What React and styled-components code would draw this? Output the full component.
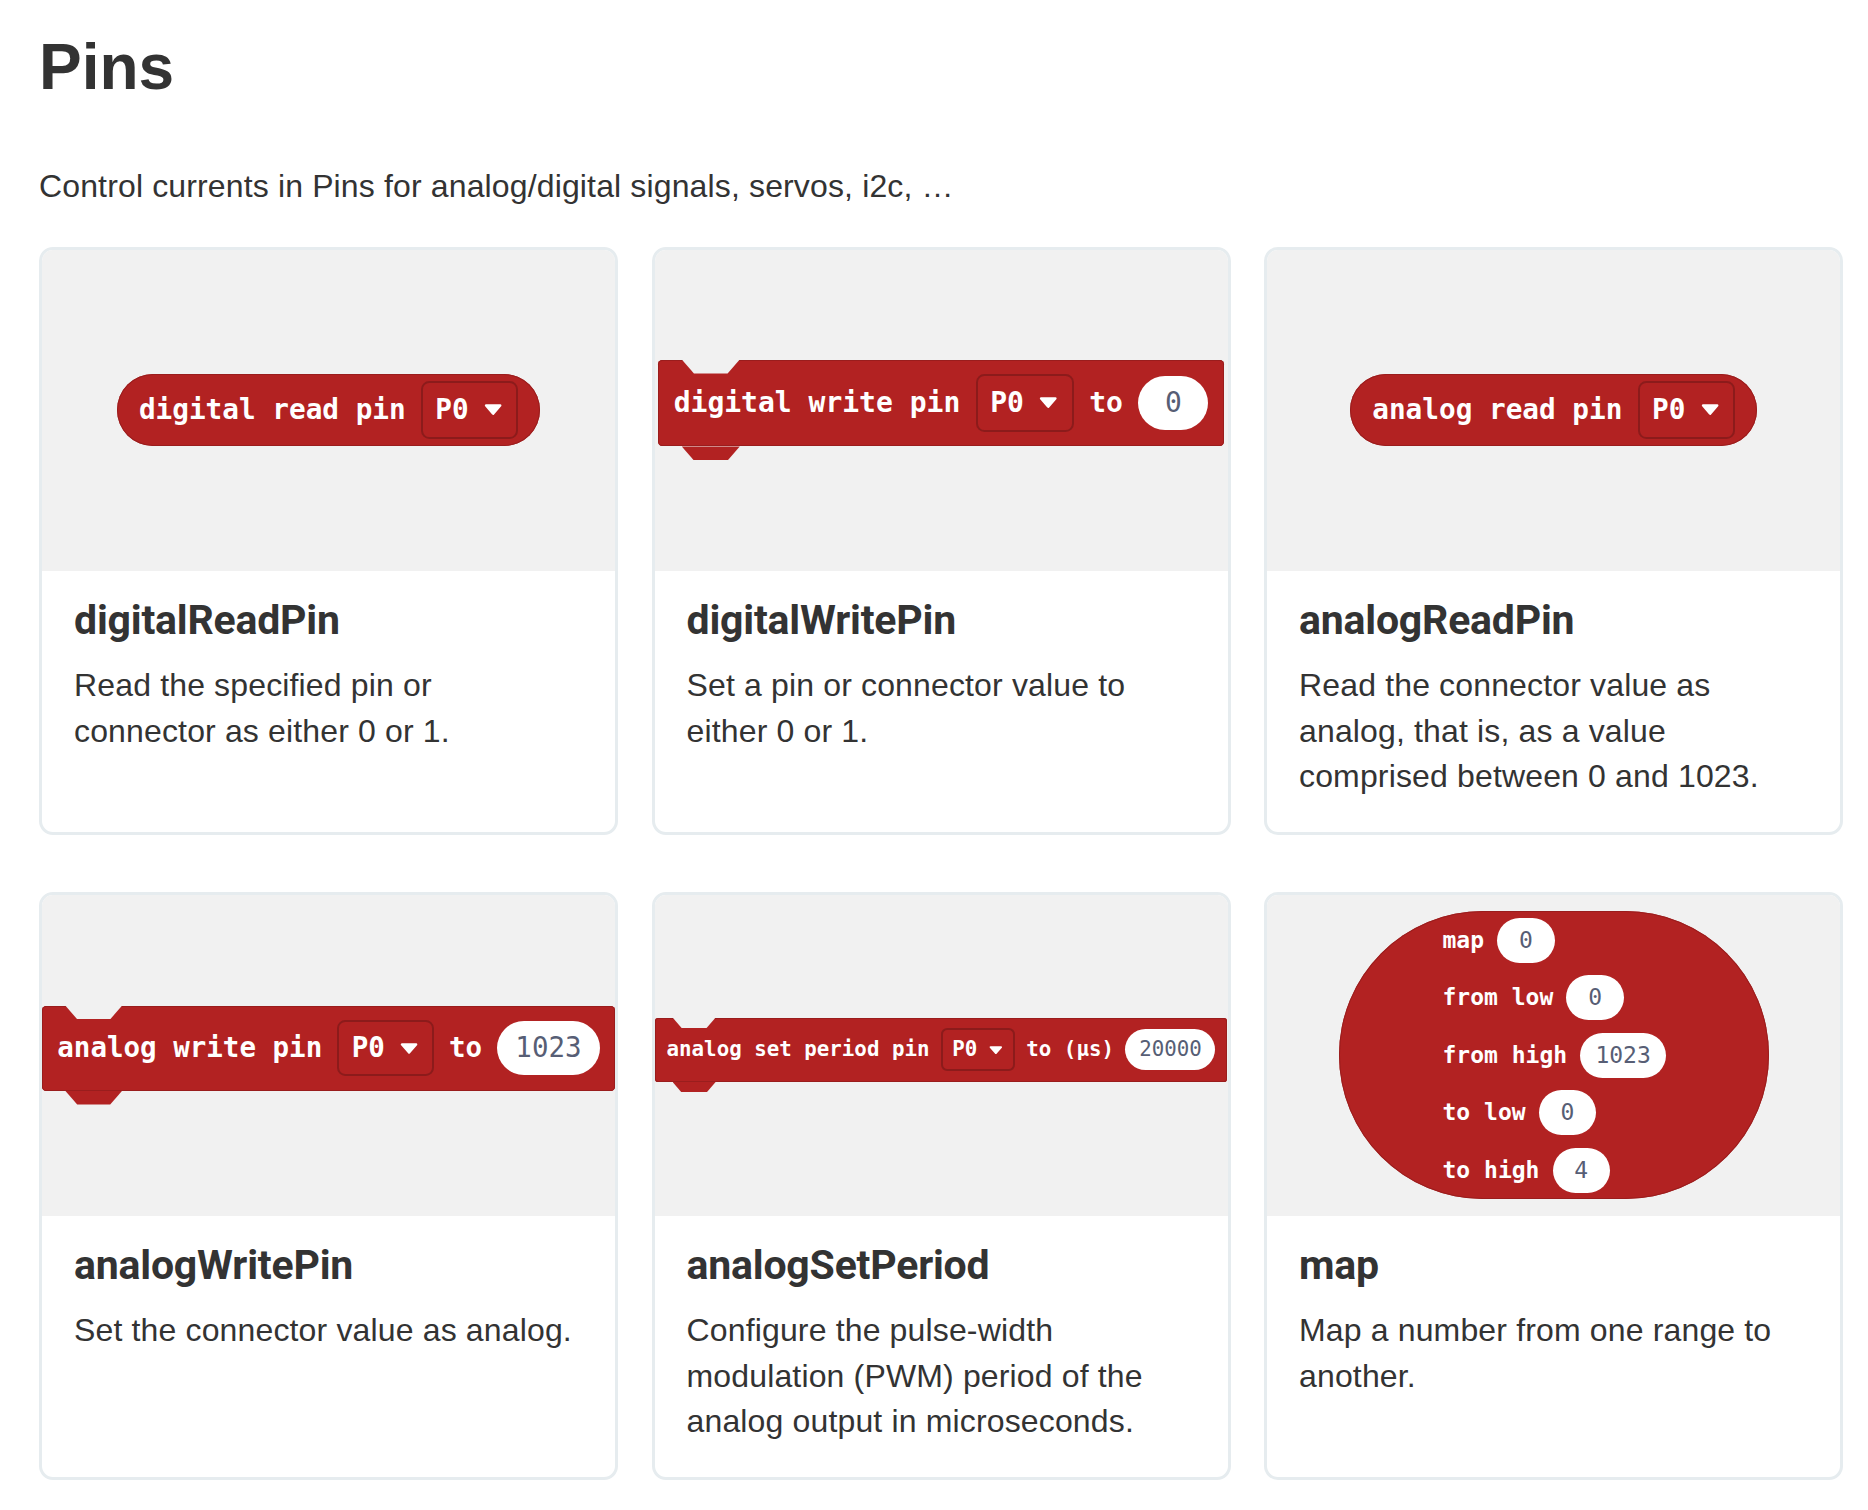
import React from 'react';
import styled, { createGlobalStyle } from 'styled-components';

const GlobalStyle = createGlobalStyle`
  html, body {
    margin: 0;
    padding: 0;
    background: #fff;
  }
`;

const Page = styled.main`
  padding: 29px 24px 32px 39px;
  font-family: "Liberation Sans", Arial, sans-serif;
  color: #333;
`;

const Heading = styled.h1`
  margin: 0;
  font-size: 64px;
  line-height: 1.2;
  font-weight: 700;
  color: #333;
`;

const Lead = styled.p`
  margin: 58px 0 0;
  font-size: 32px;
  line-height: 1.4285;
  letter-spacing: 0.14px;
`;

const Grid = styled.div`
  margin-top: 37px;
  display: grid;
  grid-template-columns: repeat(3, 579px);
  column-gap: 33.5px;
  row-gap: 56.5px;
`;

const Card = styled.article`
  display: flex;
  flex-direction: column;
  border: 3px solid #e6ecef;
  border-radius: 14px;
  overflow: hidden;
  background: #fff;
`;

const Preview = styled.div`
  height: 321px;
  background: #f1f1f1;
  display: flex;
  align-items: center;
  justify-content: center;
`;

const Content = styled.div`
  padding: 23px 38px 32px 32px;
`;

const Name = styled.h2`
  margin: 0;
  font-family: Roboto, "Liberation Sans", sans-serif;
  font-size: 41px;
  line-height: 1.2857;
  font-weight: 700;
  letter-spacing: -0.2px;
  color: #333;
`;

const Desc = styled.p`
  margin: 16.7px 0 0;
  font-size: 32px;
  line-height: 1.4285;
  letter-spacing: 0.15px;
  color: #333;
`;

/* ---- blocks ---- */

const Block = styled.div`
  position: relative;
  display: inline-flex;
  align-items: center;
  box-sizing: border-box;
  font-family: "DejaVu Sans Mono", "Liberation Mono", monospace;
  font-weight: 700;
  font-size: ${p => p.$size}px;
  line-height: 1;
  color: #fff;
  background: #b22222;
  white-space: pre;
`;

const OutputBlock = styled(Block)`
  height: 2.57em;
  padding: 0 0.8em;
  gap: 0.55em;
  border-radius: 999px;
  box-shadow: inset 0 0 0 1px #9a1d1d;
`;

const notch = 'polygon(0 0, 100% 0, 79% 100%, 21% 100%)';

const StatementBlock = styled(Block)`
  height: 3.1em;
  margin-bottom: 0.5em;
  padding: 0 0.55em;
  gap: 0.55em;
  border-radius: 0.15em;
  box-shadow: inset 0 0 0 1px #9a1d1d;

  &::before,
  &::after {
    content: "";
    position: absolute;
    left: 0.84em;
    width: 2.07em;
    height: 0.5em;
    clip-path: ${notch};
  }
  &::before {
    top: 0;
    background: #f1f1f1;
  }
  &::after {
    top: 100%;
    background: #b22222;
  }
`;

const Dropdown = styled.span`
  display: inline-flex;
  align-items: center;
  gap: 0.55em;
  height: 2.06em;
  box-sizing: border-box;
  padding: 0 0.5em 0 0.45em;
  border: 2px solid #8c1b1b;
  border-radius: 0.3em;
`;

const Arrow = styled.svg`
  width: 0.66em;
  height: 0.4em;
  display: block;
`;

const NumberField = styled.span`
  display: inline-flex;
  align-items: center;
  justify-content: center;
  box-sizing: border-box;
  height: 1.96em;
  min-width: 2.5em;
  padding: 0 0.66em;
  border-radius: 999px;
  background: #fff;
  color: #575e75;
  font-weight: 400;
`;

const MapBlock = styled(Block)`
  width: 430px;
  height: 288px;
  padding: 6.5px 0 6px 104px;
  border-radius: 144px;
  flex-direction: column;
  align-items: flex-start;
  justify-content: space-between;
  box-shadow: inset 0 0 0 1px #9a1d1d;
`;

const MapRow = styled.div`
  display: flex;
  align-items: center;
  gap: 0.57em;
`;

const PinDropdown = () => (
  <Dropdown>
    P0
    <Arrow viewBox="0 0 18 11">
      <path d="M2 1.5 L16 1.5 L9 9.5 Z" fill="#fff" stroke="#fff" strokeWidth="2.5" strokeLinejoin="round" />
    </Arrow>
  </Dropdown>
);

const cards = [
  {
    name: 'digitalReadPin',
    desc: 'Read the specified pin or connector as either 0 or 1.',
    preview: (
      <OutputBlock $size={27.7}>
        digital read pin
        <PinDropdown />
      </OutputBlock>
    ),
  },
  {
    name: 'digitalWritePin',
    desc: 'Set a pin or connector value to either 0 or 1.',
    preview: (
      <StatementBlock $size={28}>
        digital write pin
        <PinDropdown />
        to
        <NumberField>0</NumberField>
      </StatementBlock>
    ),
  },
  {
    name: 'analogReadPin',
    desc: 'Read the connector value as analog, that is, as a value comprised between 0 and 1023.',
    preview: (
      <OutputBlock $size={27.7}>
        analog read pin
        <PinDropdown />
      </OutputBlock>
    ),
  },
  {
    name: 'analogWritePin',
    desc: 'Set the connector value as analog.',
    preview: (
      <StatementBlock $size={27.5}>
        analog write pin
        <PinDropdown />
        to
        <NumberField>1023</NumberField>
      </StatementBlock>
    ),
  },
  {
    name: 'analogSetPeriod',
    desc: 'Configure the pulse-width modulation (PWM) period of the analog output in microseconds.',
    preview: (
      <StatementBlock $size={20.8}>
        analog set period pin
        <PinDropdown />
        to (µs)
        <NumberField>20000</NumberField>
      </StatementBlock>
    ),
  },
  {
    name: 'map',
    desc: 'Map a number from one range to another.',
    preview: (
      <MapBlock $size={23}>
        {[
          ['map', '0'],
          ['from low', '0'],
          ['from high', '1023'],
          ['to low', '0'],
          ['to high', '4'],
        ].map(([label, value]) => (
          <MapRow key={label}>
            {label}
            <NumberField>{value}</NumberField>
          </MapRow>
        ))}
      </MapBlock>
    ),
  },
];

export default function App() {
  return (
    <>
      <GlobalStyle />
      <Page>
        <Heading>Pins</Heading>
        <Lead>Control currents in Pins for analog/digital signals, servos, i2c, …</Lead>
        <Grid>
          {cards.map(card => (
            <Card key={card.name}>
              <Preview>{card.preview}</Preview>
              <Content>
                <Name>{card.name}</Name>
                <Desc>{card.desc}</Desc>
              </Content>
            </Card>
          ))}
        </Grid>
      </Page>
    </>
  );
}
